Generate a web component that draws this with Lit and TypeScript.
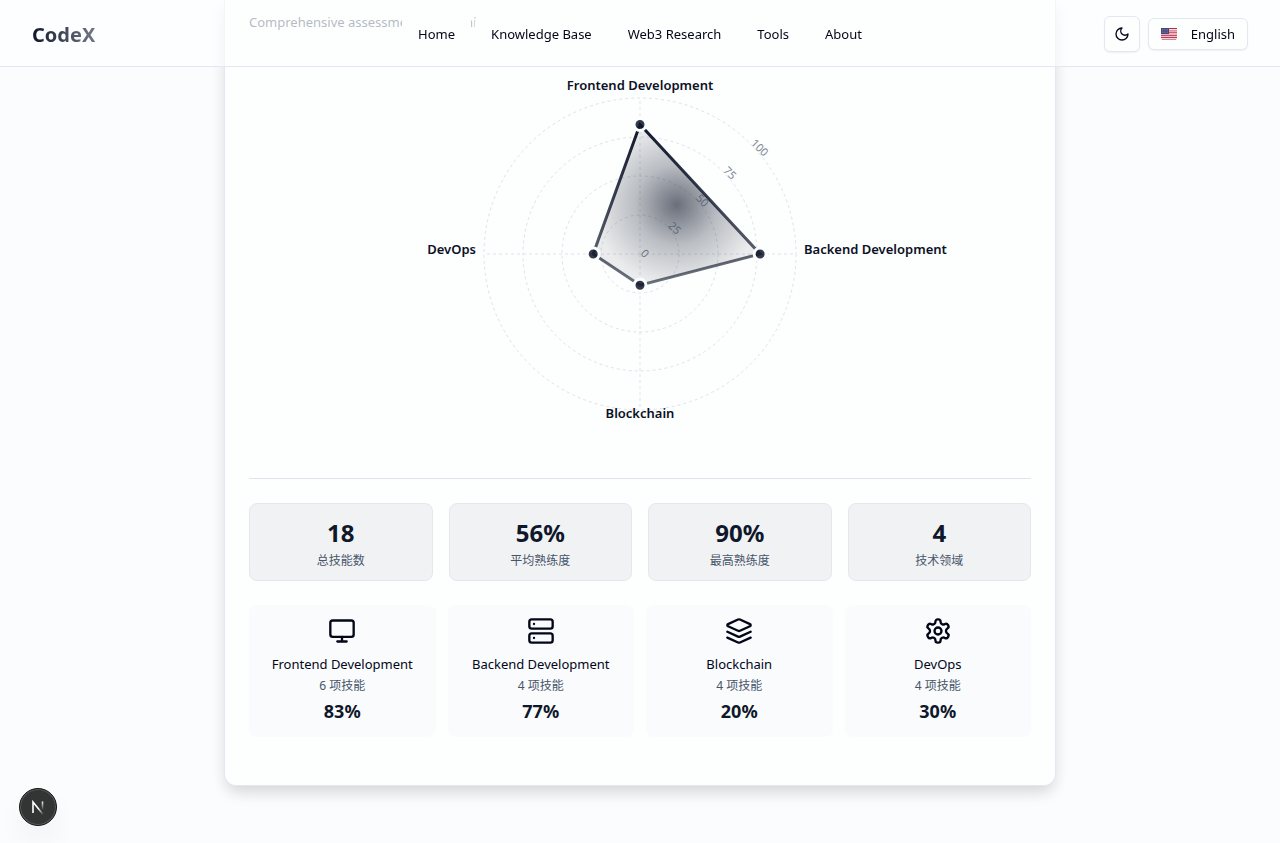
import { LitElement, html, svg, css } from "lit";
import { customElement } from "lit/decorators.js";

interface Domain {
  name: string;
  skills: number;
  level: number;
}

const domains: Domain[] = [
  { name: "Frontend Development", skills: 6, level: 83 },
  { name: "Backend Development", skills: 4, level: 77 },
  { name: "Blockchain", skills: 4, level: 20 },
  { name: "DevOps", skills: 4, level: 30 },
];

const stats = [
  { value: "18", label: "总技能数" },
  { value: "56%", label: "平均熟练度" },
  { value: "90%", label: "最高熟练度" },
  { value: "4", label: "技术领域" },
];

const links = ["Home", "Knowledge Base", "Web3 Research", "Tools", "About"];

const icons = [
  svg`<rect width="20" height="14" x="2" y="3" rx="2"/><path d="M8 21h8M12 17v4"/>`,
  svg`<rect width="20" height="8" x="2" y="2" rx="2"/><rect width="20" height="8" x="2" y="14" rx="2"/><path d="M6 6h.01M6 18h.01"/>`,
  svg`<path d="m12.83 2.18a2 2 0 0 0-1.66 0L2.6 6.08a1 1 0 0 0 0 1.83l8.58 3.91a2 2 0 0 0 1.66 0l8.58-3.9a1 1 0 0 0 0-1.83Z"/><path d="m22 17.65-9.17 4.16a2 2 0 0 1-1.66 0L2 17.65"/><path d="m22 12.65-9.17 4.16a2 2 0 0 1-1.66 0L2 12.65"/>`,
  svg`<path d="M12.22 2h-.44a2 2 0 0 0-2 2v.18a2 2 0 0 1-1 1.73l-.43.25a2 2 0 0 1-2 0l-.15-.08a2 2 0 0 0-2.73.73l-.22.38a2 2 0 0 0 .73 2.73l.15.1a2 2 0 0 1 1 1.72v.51a2 2 0 0 1-1 1.74l-.15.09a2 2 0 0 0-.73 2.73l.22.38a2 2 0 0 0 2.73.73l.15-.08a2 2 0 0 1 2 0l.43.25a2 2 0 0 1 1 1.73V20a2 2 0 0 0 2 2h.44a2 2 0 0 0 2-2v-.18a2 2 0 0 1 1-1.73l.43-.25a2 2 0 0 1 2 0l.15.08a2 2 0 0 0 2.73-.73l.22-.39a2 2 0 0 0-.73-2.73l-.15-.08a2 2 0 0 1-1-1.74v-.5a2 2 0 0 1 1-1.74l.15-.09a2 2 0 0 0 .73-2.73l-.22-.38a2 2 0 0 0-2.73-.73l-.15.08a2 2 0 0 1-2 0l-.43-.25a2 2 0 0 1-1-1.73V4a2 2 0 0 0-2-2z"/><circle cx="12" cy="12" r="3"/>`,
];

@customElement("skill-radar")
class SkillRadar extends LitElement {
  static styles = css`
    :host { display: block; }
    .chart { display: block; width: 100%; height: 400px; font-family: "Noto Sans", sans-serif; }
    .grid { fill: none; stroke: #dde3ec; stroke-dasharray: 3 3; }
    .name { font-size: 13px; font-weight: 600; fill: #0b1124; }
    .tick { font-size: 11px; fill: #475569; opacity: 0.7; }
    .area { fill: url(#fill); stroke: url(#edge); stroke-width: 3; }
    .dot { fill: #0f172a; fill-opacity: 0.85; stroke: #fdfefe; stroke-width: 3; }
  `;

  render() {
    const cx = 391;
    const cy = 200;
    const radius = 156;
    const ticks = [0, 25, 50, 75, 100];
    const axes = [[0, -1], [1, 0], [0, 1], [-1, 0]];
    const points = domains.map((d, i) => [
      cx + (axes[i][0] * radius * d.level) / 100,
      cy + (axes[i][1] * radius * d.level) / 100,
    ]);
    const names = [
      { x: cx, y: 36, anchor: "middle" },
      { x: 555, y: cy, anchor: "start" },
      { x: cx, y: 364, anchor: "middle" },
      { x: 227, y: cy, anchor: "end" },
    ];
    return html`
      <svg class="chart" viewBox="0 0 782 400" role="img" aria-label="Radar">
        <defs>
          <radialGradient id="fill">
            <stop offset="0" stop-color="#0f172a" stop-opacity="0.62" />
            <stop offset="0.5" stop-color="#0f172a" stop-opacity="0.28" />
            <stop offset="1" stop-color="#0f172a" stop-opacity="0.08" />
          </radialGradient>
          <linearGradient id="edge" x1="0" y1="0" x2="0" y2="1">
            <stop offset="0" stop-color="#0f172a" />
            <stop offset="1" stop-color="#0f172a" stop-opacity="0.6" />
          </linearGradient>
        </defs>
        ${axes.map(([dx, dy]) => svg`<line class="grid" x1=${cx} y1=${cy} x2=${cx + dx * radius} y2=${cy + dy * radius} />`)}
        ${ticks.slice(1).map((t) => svg`<circle class="grid" cx=${cx} cy=${cy} r=${(radius * t) / 100} />`)}
        ${names.map((n, i) => svg`<text class="name" x=${n.x} y=${n.y} text-anchor=${n.anchor}>${domains[i].name}</text>`)}
        <polygon class="area" points=${points.map((p) => p.join(",")).join(" ")} />
        ${points.map(([x, y]) => svg`<circle class="dot" cx=${x} cy=${y} r="6" />`)}
        ${ticks.map((t) => {
          const d = ((radius * t) / 100) * Math.SQRT1_2;
          return svg`<text class="tick" transform="translate(${cx + d} ${cy - d}) rotate(45)">${t}</text>`;
        })}
      </svg>
    `;
  }
}

@customElement("app-root")
class AppRoot extends LitElement {
  static styles = css`
    :host {
      display: block;
      min-height: 100vh;
      background: #fbfcfe;
      color: #020617;
      font: 13px/20px "Noto Sans", "Noto Sans CJK SC", sans-serif;
    }
    * { box-sizing: border-box; }
    .header {
      position: fixed;
      inset: 0 0 auto;
      z-index: 2;
      display: grid;
      grid-template-columns: 1fr auto 1fr;
      align-items: center;
      padding: 16px 32px 14px;
      border-bottom: 1px solid #e0e8f1;
      background: rgba(254, 255, 255, 0.6);
    }
    .brand {
      justify-self: start;
      padding-top: 2px;
      font-size: 20px;
      line-height: 28px;
      font-weight: 700;
      text-decoration: none;
      color: transparent;
      background: linear-gradient(90deg, #0f172a, #737884);
      background-clip: text;
      -webkit-background-clip: text;
    }
    .nav { display: flex; gap: 4px; }
    .link {
      padding: 8px 16px;
      border-radius: 6px;
      background: #fdfefe;
      color: inherit;
      text-decoration: none;
    }
    .actions { justify-self: end; display: flex; align-items: center; gap: 8px; }
    .button {
      display: flex;
      align-items: center;
      justify-content: center;
      margin: 0;
      border: 1px solid #e0e8f1;
      border-radius: 6px;
      background: #fdfefe;
      box-shadow: 0 1px 2px rgba(0, 0, 0, 0.06);
      color: inherit;
      font: inherit;
    }
    .theme { width: 36px; height: 36px; padding: 0; }
    .language { height: 32px; padding: 0 12px; gap: 14px; }
    .line { fill: none; stroke: currentColor; stroke-width: 2; stroke-linecap: round; stroke-linejoin: round; }
    .main { padding: 0 24px 57px; }
    .card {
      max-width: 832px;
      margin: 0 auto;
      padding: 12px 24px 48px;
      border: 1px solid #e0e8f1;
      border-top: 0;
      border-radius: 0 0 12px 12px;
      background: #fdfefe;
      box-shadow: 0 10px 15px -3px rgba(0, 0, 0, 0.1), 0 4px 16px rgba(0, 0, 0, 0.06);
    }
    .lead { margin: 0 0 22px; color: #475569; }
    .summary { margin-top: 24px; padding-top: 24px; border-top: 1px solid #e0e4ee; }
    .stats, .domains { display: grid; grid-template-columns: repeat(4, 1fr); text-align: center; }
    .stats { gap: 16px; }
    .stat { padding: 13px 12px 11px; border: 1px solid #e2e8f0; border-radius: 8px; background: #f1f2f4; }
    .value { font-size: 24px; line-height: 32px; font-weight: 700; color: #0f172a; }
    .label { margin-top: 4px; font-size: 12px; line-height: 16px; color: #475569; }
    .domains { gap: 12px; margin-top: 24px; }
    .domain { padding: 12px; border-radius: 8px; background: #fafbfd; }
    .icon { display: block; width: 28px; height: 28px; margin: 0 auto 9px; }
    .level { margin-top: 3px; font-size: 18px; line-height: 28px; font-weight: 700; color: #0f172a; }
    .badge {
      position: fixed;
      left: 19px;
      bottom: 17px;
      z-index: 3;
      width: 38px;
      height: 38px;
      padding: 0;
      border: 1px solid #151515;
      border-radius: 50%;
      background: #333534;
      box-shadow: inset 0 0 0 1px #5a5c5b, 0 16px 32px -8px rgba(0, 0, 0, 0.12);
    }
    .mark { display: block; width: 36px; height: 36px; }
  `;

  render() {
    return html`
      <header class="header">
        <a class="brand" href="#">CodeX</a>
        <nav class="nav">${links.map((l) => html`<a class="link" href="#">${l}</a>`)}</nav>
        <div class="actions">
          <button class="button theme" aria-label="Theme">
            <svg class="line" width="16" height="16" viewBox="0 0 24 24"><path d="M12 3a6 6 0 0 0 9 9 9 9 0 1 1-9-9Z" /></svg>
          </button>
          <button class="button language">
            <svg width="16" height="12" viewBox="0 0 16 12">
              <rect width="16" height="12" fill="#f3e9ec" />
              <path d="M0 .5h16M0 4.2h16M0 7.7h16M0 9.6h16" stroke="#bd2742" />
              <path d="M0 2.4h16M0 6h16M1 11.5h14" stroke="#dc8292" />
              <rect width="8" height="6" fill="#46467f" />
              <path d="M1 1.5h6M1 3h6M1 4.5h6" stroke="#9292b4" stroke-width=".6" stroke-dasharray="1 .7" />
            </svg>
            English
          </button>
        </div>
      </header>
      <main class="main">
        <section class="card">
          <p class="lead">Comprehensive assessment of technical</p>
          <skill-radar></skill-radar>
          <div class="summary">
            <div class="stats">
              ${stats.map((s) => html`<div class="stat"><div class="value">${s.value}</div><div class="label">${s.label}</div></div>`)}
            </div>
            <div class="domains">
              ${domains.map((d, i) => html`
                <div class="domain">
                  <svg class="icon line" viewBox="0 0 24 24">${icons[i]}</svg>
                  <div>${d.name}</div>
                  <div class="label">${d.skills} 项技能</div>
                  <div class="level">${d.level}%</div>
                </div>`)}
            </div>
          </div>
        </section>
      </main>
      <button class="badge" aria-label="Next.js">
        <svg class="mark" viewBox="0 0 36 36" fill="none">
          <defs>
            <linearGradient id="slash" gradientUnits="userSpaceOnUse" x1="19" y1="19" x2="24" y2="25">
              <stop stop-color="#fff" /><stop offset="1" stop-color="#fff" stop-opacity="0" />
            </linearGradient>
            <linearGradient id="post" gradientUnits="userSpaceOnUse" x1="0" y1="12" x2="0" y2="21">
              <stop stop-color="#fff" /><stop offset="1" stop-color="#fff" stop-opacity="0" />
            </linearGradient>
          </defs>
          <path d="M13 24V13L23.500 26" stroke="url(#slash)" stroke-width="1.600" />
          <path d="M22.500 12.500V21" stroke="url(#post)" stroke-width="1.600" />
        </svg>
      </button>
    `;
  }
}
